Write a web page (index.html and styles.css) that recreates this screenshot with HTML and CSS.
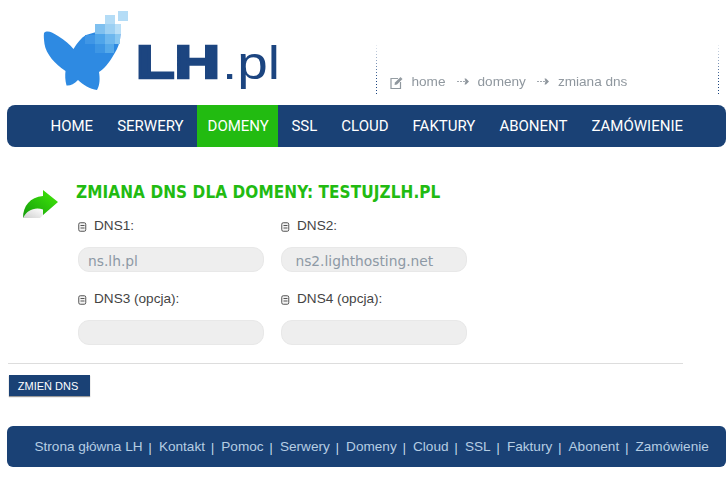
FILE: index.html
```html
<!DOCTYPE html>
<html lang="pl">
<head>
<meta charset="utf-8">
<title>LH.pl</title>
<link rel="stylesheet" href="styles.css">
</head>
<body>
<header class="top">
  <svg class="logo" width="290" height="105" viewBox="0 0 290 105">
    <path d="M44 33 C47 30 52 32 58 36 C65 40 70 45 73.500 49 C77 43 81 38 86 35 L120 25 C122 38 119 47 113 56 C109 63 104 69 99 72 C100 78 100 85 97 90 C90 89 83 85 78 80 C74 84 70 86 66.500 85.500 C65 80 65 75 65.500 71 C55 64 46 54 44.500 44 C44 40 43.500 36 44 33 Z" fill="#2e8ae2"/>
    <rect x="85" y="35" width="10" height="9" fill="#3f96e6"/>
    <rect x="95" y="24" width="10" height="10" fill="#7fc0ef"/>
    <rect x="105" y="24" width="10" height="10" fill="#9cd0f3"/>
    <rect x="115" y="24" width="6" height="10" fill="#b9dff7"/>
    <rect x="95" y="34" width="10" height="10" fill="#4fa5ea"/>
    <rect x="105" y="34" width="10" height="10" fill="#6db7ee"/>
    <rect x="115" y="34" width="5" height="10" fill="#8ac8f1"/>
    <rect x="95" y="44" width="10" height="9" fill="#3d96e5"/>
    <rect x="105" y="44" width="9" height="9" fill="#55a9ea"/>
    <rect x="105" y="15" width="10" height="9" fill="#b4dcf6"/>
    <rect x="118" y="11" width="10" height="10" fill="#b4dcf6"/>
    <text class="logo-lh" x="136" y="78" textLength="84" lengthAdjust="spacingAndGlyphs">LH</text>
    <text class="logo-pl" x="222" y="78.500" textLength="58" lengthAdjust="spacingAndGlyphs">.pl</text>
  </svg>
  <nav class="crumbs">
    <svg class="crumb-icon" width="13" height="13" viewBox="0 0 13 13">
      <path d="M8 2.500H1V12.500H10.500V6" fill="none" stroke="#8f979e" stroke-width="1.200"/>
      <path d="M4.500 9L5 6.500L10.500 1L12.500 3L7 8.500Z" fill="#8f979e"/>
    </svg>
    <span>home</span>
    <svg class="crumb-arrow" width="12" height="7" viewBox="0 0 12 7"><path d="M0 3.500H2M3 3.500H5M6 3.500H8" stroke="#a2a8ae" fill="none"/><path d="M7.500 .5H9L12 3.500L9 6.500H7.500L8.500 3.500Z" fill="#8f979e"/></svg>
    <span>domeny</span>
    <svg class="crumb-arrow" width="12" height="7" viewBox="0 0 12 7"><path d="M0 3.500H2M3 3.500H5M6 3.500H8" stroke="#a2a8ae" fill="none"/><path d="M7.500 .5H9L12 3.500L9 6.500H7.500L8.500 3.500Z" fill="#8f979e"/></svg>
    <span>zmiana dns</span>
  </nav>
</header>

<nav class="menu">
  <a href="#">HOME</a>
  <a href="#">SERWERY</a>
  <a href="#" class="active">DOMENY</a>
  <a href="#">SSL</a>
  <a href="#">CLOUD</a>
  <a href="#">FAKTURY</a>
  <a href="#">ABONENT</a>
  <a href="#">ZAMÓWIENIE</a>
</nav>

<main class="content">
  <div class="panel">
    <svg class="share" width="38" height="30" viewBox="0 0 38 30">
      <defs>
        <linearGradient id="arrow" x1="0" y1="1" x2="1" y2="0"><stop offset="0" stop-color="#159a0c"/><stop offset=".6" stop-color="#2fcb0a"/><stop offset="1" stop-color="#48ea08"/></linearGradient>
        <linearGradient id="under" x1="0" y1="1" x2="1" y2="0"><stop offset="0" stop-color="#cfcfcf"/><stop offset="1" stop-color="#ffffff"/></linearGradient>
      </defs>
      <path d="M1 28 C5 20 13 16.500 21 19.500 L21 25 L18 28 Z" fill="url(#under)"/>
      <path d="M1 28 C1 16 8 7 21 6 L21 0 L36 12 L21 25 L21 19.500 C13 16.500 5 20 1 28 Z" fill="url(#arrow)"/>
    </svg>
    <div class="form-area">
      <h1>ZMIANA DNS DLA DOMENY: TESTUJZLH.PL</h1>
      <form class="fields">
        <div class="field">
          <label><svg class="srv" width="9" height="10" viewBox="0 0 9 10"><rect x=".75" y=".75" width="7" height="8.500" rx="1.500" fill="#f4f4f4" stroke="#555"/><path d="M2.500 3.500H6.500M2.500 6H6.500" stroke="#555"/></svg>DNS1:</label>
          <input type="text" value="ns.lh.pl" disabled>
        </div>
        <div class="field">
          <label><svg class="srv" width="9" height="10" viewBox="0 0 9 10"><rect x=".75" y=".75" width="7" height="8.500" rx="1.500" fill="#f4f4f4" stroke="#555"/><path d="M2.500 3.500H6.500M2.500 6H6.500" stroke="#555"/></svg>DNS2:</label>
          <input type="text" value=" ns2.lighthosting.net" disabled>
        </div>
        <div class="field">
          <label><svg class="srv" width="9" height="10" viewBox="0 0 9 10"><rect x=".75" y=".75" width="7" height="8.500" rx="1.500" fill="#f4f4f4" stroke="#555"/><path d="M2.500 3.500H6.500M2.500 6H6.500" stroke="#555"/></svg>DNS3 (opcja):</label>
          <input type="text" disabled>
        </div>
        <div class="field">
          <label><svg class="srv" width="9" height="10" viewBox="0 0 9 10"><rect x=".75" y=".75" width="7" height="8.500" rx="1.500" fill="#f4f4f4" stroke="#555"/><path d="M2.500 3.500H6.500M2.500 6H6.500" stroke="#555"/></svg>DNS4 (opcja):</label>
          <input type="text" disabled>
        </div>
      </form>
    </div>
  </div>
  <hr class="rule">
  <button class="submit" type="button">ZMIEŃ DNS</button>
</main>

<footer class="foot">
  <a href="#">Strona główna LH</a><i>|</i>
  <a href="#">Kontakt</a><i>|</i>
  <a href="#">Pomoc</a><i>|</i>
  <a href="#">Serwery</a><i>|</i>
  <a href="#">Domeny</a><i>|</i>
  <a href="#">Cloud</a><i>|</i>
  <a href="#">SSL</a><i>|</i>
  <a href="#">Faktury</a><i>|</i>
  <a href="#">Abonent</a><i>|</i>
  <a href="#">Zamówienie</a>
</footer>
</body>
</html>
```
FILE: styles.css
```css
* { box-sizing: border-box; }
html, body { margin: 0; padding: 0; background: #fff; }
body { width: 726px; height: 489px; overflow: hidden; font-family: "Liberation Sans", Arial, sans-serif; }

.top { height: 105px; display: flex; align-items: flex-start; }
.logo { display: block; flex: none; }
.logo-lh { font: 700 47px "Liberation Sans", sans-serif; fill: #1c4580; stroke: #1c4580; stroke-width: 2.500px; }
.logo-pl { font: 400 47px "Liberation Sans", sans-serif; fill: #1c4580; }

.crumbs {
  margin: 45px 0 0 86px;
  width: 343px;
  height: 51px;
  padding: 21px 0 0 14px;
  display: flex;
  align-items: center;
  align-self: flex-start;
  gap: 8.500px;
  font-size: 13.600px;
  line-height: 15px;
  color: #8f979e;
  background:
    repeating-linear-gradient(to bottom, #1c4580 0 1px, transparent 1px 3px) left top / 1px 100% no-repeat,
    repeating-linear-gradient(to bottom, #1c4580 0 1px, transparent 1px 3px) right top / 1px 100% no-repeat;
  -webkit-mask: linear-gradient(to bottom, rgba(0,0,0,.1), #000 70%);
  mask: linear-gradient(to bottom, rgba(0,0,0,.1), #000 70%);
}
.crumb-icon { margin-top: 2px; }
.crumb-arrow { margin: 1px 0 0 3px; }

.menu {
  margin-left: 7px;
  height: 42px;
  padding-left: 31.500px;
  display: flex;
  background: #1a4175;
  border-radius: 8px;
}
.menu a {
  padding: 0 12px;
  font: 400 15px/42px Roboto, sans-serif;
  color: #fff;
  text-decoration: none;
}
.menu a.active { margin: 0 1.500px 0 1px; padding: 0 9px 0 11px; background: #22bb11; }

.content { padding: 0 43px 0 8px; }
.panel { display: flex; padding: 34px 0 0 14px; }
.share { margin-top: 9px; flex: none; }
.form-area { margin-left: 16px; }
h1 {
  margin: 0;
  font: 700 17px/22px "DejaVu Sans Condensed", "DejaVu Sans", sans-serif;
  font-stretch: condensed;
  letter-spacing: .09px;
  color: #22bb11;
  white-space: nowrap;
}
.fields {
  margin: 0 0 0 2px;
  display: grid;
  grid-template-columns: 186px 186px;
  column-gap: 17px;
  row-gap: 19px;
  padding-top: 15px;
}
.field { display: flex; flex-direction: column; }
.field label {
  height: 15px;
  font-size: 13.600px;
  line-height: 15px;
  color: #444;
  display: flex;
  align-items: center;
  margin-bottom: 14px;
}
.srv { margin: 2px 7px 0 0; flex: none; }
input {
  width: 186px;
  height: 25px;
  padding: 3px 10px 0 9px;
  border: 1px solid #e8e8e8;
  border-radius: 11px;
  background: #eee;
  font: 13.800px "DejaVu Sans", sans-serif;
  color: #8d99a5;
  opacity: 1;
  -webkit-text-fill-color: #8d99a5;
}

.rule { margin: 18px 0 0; border: 0; border-top: 1px solid #ddd; }
.submit {
  display: block;
  margin: 11px 0 0 1px;
  width: 81px;
  height: 21px;
  padding: 0 3px 0 0;
  border: 0;
  background: #1a4175;
  box-shadow: 0 1px 1px #999;
  color: #fff;
  font: 11px "Liberation Sans", sans-serif;
}

.foot {
  margin: 30px 0 0 7px;
  height: 41px;
  padding-left: 27.500px;
  display: flex;
  align-items: center;
  background: #1a4175;
  border-radius: 6px;
  font-size: 13.600px;
  color: #b5cde3;
  white-space: nowrap;
}
.foot a { color: #b5cde3; text-decoration: none; }
.foot i { font-style: normal; margin: 2px 7.200px 0 6px; font-size: 12px; color: #cfe0f0; }
```
